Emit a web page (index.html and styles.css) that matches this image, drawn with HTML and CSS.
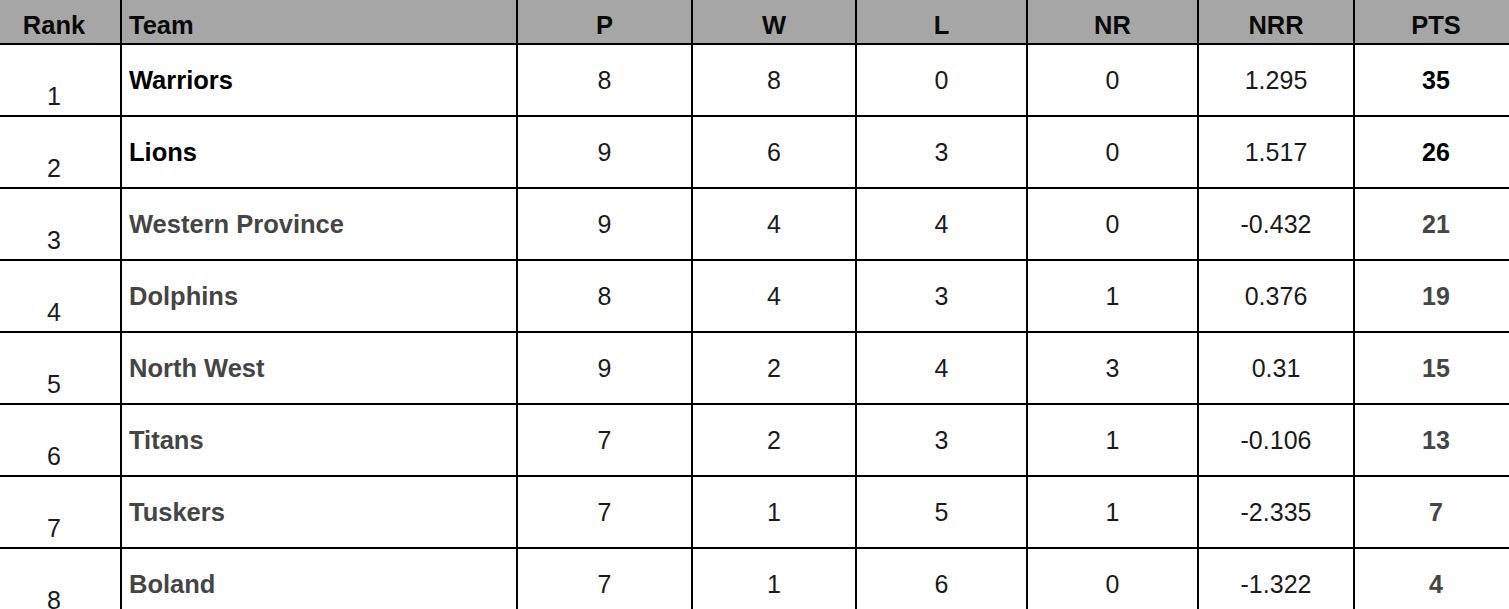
FILE: index.html
```html
<!DOCTYPE html>
<html lang="en">
<head>
<meta charset="utf-8">
<title>Points Table</title>
<link rel="stylesheet" href="styles.css">
</head>
<body>
<table class="standings">
  <colgroup>
    <col class="c-rank"><col class="c-team"><col class="c-p"><col class="c-w"><col class="c-l"><col class="c-nr"><col class="c-nrr"><col class="c-pts">
  </colgroup>
  <thead>
    <tr>
      <th class="rank">Rank</th>
      <th class="team">Team</th>
      <th>P</th>
      <th>W</th>
      <th>L</th>
      <th>NR</th>
      <th>NRR</th>
      <th class="pts">PTS</th>
    </tr>
  </thead>
  <tbody>
    <tr class="top">
      <td class="rank">1</td><td class="team">Warriors</td><td>8</td><td>8</td><td>0</td><td>0</td><td>1.295</td><td class="pts">35</td>
    </tr>
    <tr class="top">
      <td class="rank">2</td><td class="team">Lions</td><td>9</td><td>6</td><td>3</td><td>0</td><td>1.517</td><td class="pts">26</td>
    </tr>
    <tr>
      <td class="rank">3</td><td class="team">Western Province</td><td>9</td><td>4</td><td>4</td><td>0</td><td>-0.432</td><td class="pts">21</td>
    </tr>
    <tr>
      <td class="rank">4</td><td class="team">Dolphins</td><td>8</td><td>4</td><td>3</td><td>1</td><td>0.376</td><td class="pts">19</td>
    </tr>
    <tr>
      <td class="rank">5</td><td class="team">North West</td><td>9</td><td>2</td><td>4</td><td>3</td><td>0.31</td><td class="pts">15</td>
    </tr>
    <tr>
      <td class="rank">6</td><td class="team">Titans</td><td>7</td><td>2</td><td>3</td><td>1</td><td>-0.106</td><td class="pts">13</td>
    </tr>
    <tr>
      <td class="rank">7</td><td class="team">Tuskers</td><td>7</td><td>1</td><td>5</td><td>1</td><td>-2.335</td><td class="pts">7</td>
    </tr>
    <tr>
      <td class="rank">8</td><td class="team">Boland</td><td>7</td><td>1</td><td>6</td><td>0</td><td>-1.322</td><td class="pts">4</td>
    </tr>
  </tbody>
</table>
</body>
</html>
```
FILE: styles.css
```css
html, body {
  margin: 0;
  padding: 0;
  background: #ffffff;
  overflow: hidden;
}

.standings {
  width: 1509px;
  table-layout: fixed;
  border-collapse: separate;
  border-spacing: 0;
  font-family: "Liberation Sans", Arial, sans-serif;
  color: #111;
}

.c-rank { width: 120px; }
.c-team { width: 396px; }
.c-p { width: 175px; }
.c-w { width: 164px; }
.c-l { width: 171px; }
.c-nr { width: 171px; }
.c-nrr { width: 156px; }
.c-pts { width: 156px; }

.standings th,
.standings td {
  box-sizing: border-box;
  border-bottom: 2px solid #000;
  border-left: 2px solid #000;
  text-align: center;
  white-space: nowrap;
}

.standings th:first-child,
.standings td:first-child {
  border-left: none;
}

.standings th {
  height: 45px;
  background: #a6a6a6;
  font-size: 25.5px;
  font-weight: bold;
  color: #0a0a0a;
  line-height: 1;
  padding: 8px 0 0;
  vertical-align: middle;
}

.standings td {
  height: 72px;
  font-size: 25px;
  line-height: 1.15;
  padding: 0;
  vertical-align: middle;
  color: #1a1a1a;
}

.standings .rank {
  padding-right: 12px;
}

.standings .pts {
  padding-left: 8px;
}

.standings td.rank {
  vertical-align: bottom;
  padding-bottom: 4px;
  color: #1a1a1a;
}

.standings .team {
  text-align: left;
  padding-left: 7px;
}

.standings td.team {
  font-weight: bold;
  font-size: 25.5px;
  color: #454545;
  padding-top: 2px;
}

.standings td.pts {
  font-weight: bold;
  color: #454545;
}

.standings tr.top td.team,
.standings tr.top td.pts {
  color: #000;
}
```
